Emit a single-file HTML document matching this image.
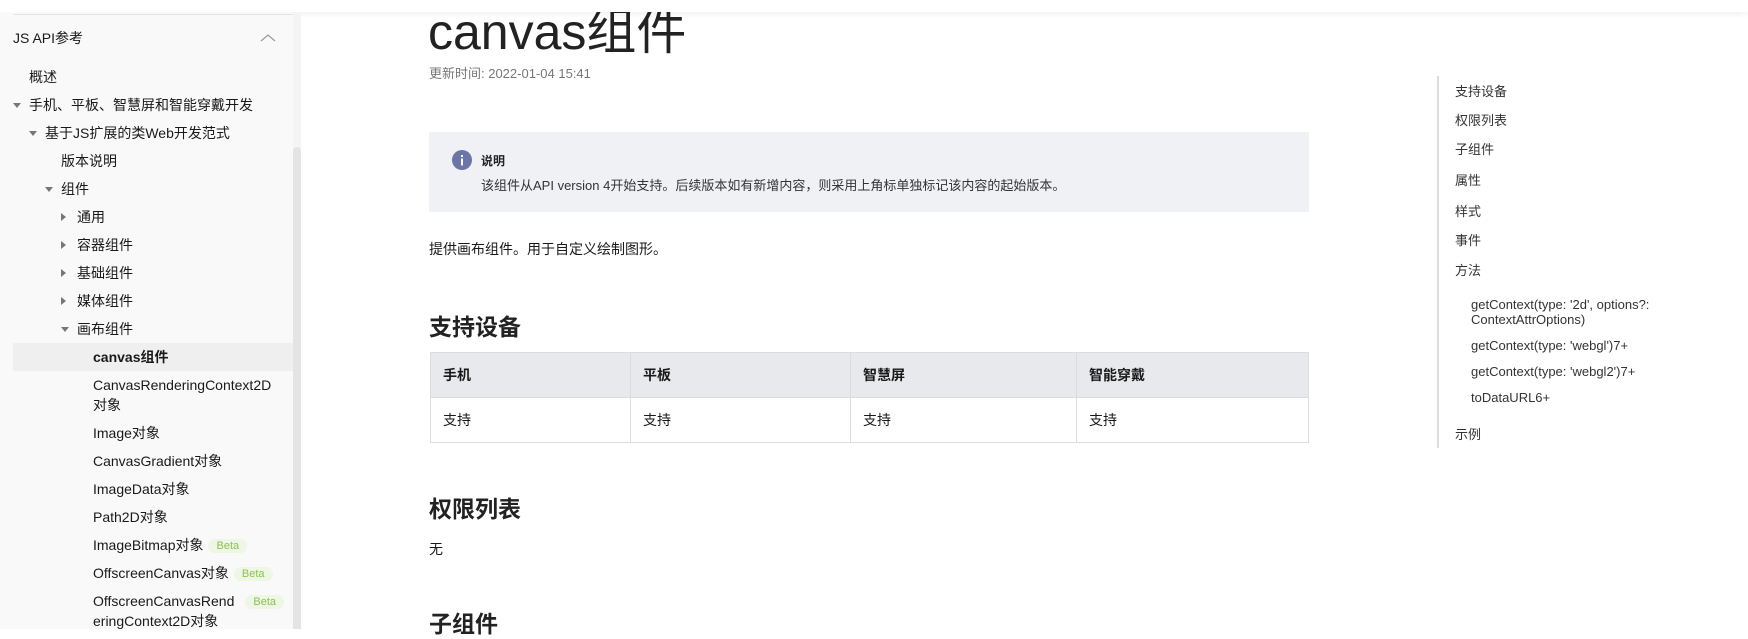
<!DOCTYPE html>
<html><head><meta charset="utf-8"><style>
*{margin:0;padding:0;box-sizing:border-box}
body{width:1748px;height:629px;overflow:hidden;background:#fff;position:relative;font-family:"Liberation Sans","Noto Sans CJK SC",sans-serif;color:#191919}
.a{position:absolute;white-space:nowrap}
#side{position:absolute;left:0;top:12px;width:293px;height:617px;background:#f9f9f9}
#track{position:absolute;left:293px;top:12px;width:8px;height:617px;background:#f4f4f4}
#thumb{position:absolute;left:293px;top:147px;width:8px;height:482px;background:#e4e4e4;border-radius:4px 4px 0 0}
.s{font-size:14px;line-height:20px;color:#191919}
.tri{position:absolute;width:0;height:0;border-left:4px solid transparent;border-right:4px solid transparent;border-top:5px solid #777}
.trr{position:absolute;width:0;height:0;border-top:4px solid transparent;border-bottom:4px solid transparent;border-left:5px solid #777}
.beta{display:inline-block;background:#eef6e5;color:#8cc152;font-size:11px;line-height:14px;padding:0 8px;border-radius:8px;margin-left:5px;vertical-align:1px}
.toc{font-size:13px;color:#333;line-height:16px}
table{border-collapse:collapse;position:absolute;left:430px;top:352px;width:879px;font-size:14px}
td,th{border:1px solid #dcdcdc;text-align:left;padding:0 12px;height:45px;color:#191919}
th{background:#e8e9ec;font-weight:bold}
h2{position:absolute;font-size:23px;font-weight:bold;color:#222;left:429px}
</style></head><body>
<div class="a" style="left:428px;top:2px;font-size:50px;color:#222;line-height:60px">canvas组件</div>
<div style="position:absolute;left:0;top:0;width:1748px;height:12px;background:#fff;box-shadow:0 2px 6px rgba(0,0,0,.06)"></div>
<div class="a" style="left:429px;top:63px;font-size:13px;color:#777">更新时间: 2022-01-04 15:41</div>

<div id="side"></div><div id="track"></div><div id="thumb"></div>
<div style="position:absolute;left:13px;top:14px;width:280px;height:1px;background:#e3e3e3"></div>
<div class="a s" style="left:13px;top:28px">JS API参考</div>
<svg class="a" style="left:260px;top:33px" width="16" height="10"><path d="M1 8 L8 2 L15 8" fill="none" stroke="#999" stroke-width="1.2"/></svg>
<div class="a s" style="left:29px;top:67px">概述</div>
<div class="tri" style="left:13px;top:103px"></div><div class="a s" style="left:29px;top:95px">手机、平板、智慧屏和智能穿戴开发</div>
<div class="tri" style="left:29px;top:131px"></div><div class="a s" style="left:45px;top:123px">基于JS扩展的类Web开发范式</div>
<div class="a s" style="left:61px;top:151px">版本说明</div>
<div class="tri" style="left:45px;top:187px"></div><div class="a s" style="left:61px;top:179px">组件</div>
<div class="trr" style="left:61px;top:213px"></div><div class="a s" style="left:77px;top:207px">通用</div>
<div class="trr" style="left:61px;top:241px"></div><div class="a s" style="left:77px;top:235px">容器组件</div>
<div class="trr" style="left:61px;top:269px"></div><div class="a s" style="left:77px;top:263px">基础组件</div>
<div class="trr" style="left:61px;top:297px"></div><div class="a s" style="left:77px;top:291px">媒体组件</div>
<div class="tri" style="left:61px;top:327px"></div><div class="a s" style="left:77px;top:319px">画布组件</div>
<div style="position:absolute;left:13px;top:343px;width:280px;height:28px;background:#efefef"></div>
<div class="a s" style="left:93px;top:347px;font-weight:bold">canvas组件</div>
<div class="a s" style="left:93px;top:375px">CanvasRenderingContext2D<br>对象</div>
<div class="a s" style="left:93px;top:423px">Image对象</div>
<div class="a s" style="left:93px;top:451px">CanvasGradient对象</div>
<div class="a s" style="left:93px;top:479px">ImageData对象</div>
<div class="a s" style="left:93px;top:507px">Path2D对象</div>
<div class="a s" style="left:93px;top:535px">ImageBitmap对象<span class="beta">Beta</span></div>
<div class="a s" style="left:93px;top:563px">OffscreenCanvas对象<span class="beta">Beta</span></div>
<div class="a s" style="left:93px;top:591px">OffscreenCanvasRend<span class="beta" style="margin-left:11px">Beta</span><br>eringContext2D对象</div>

<div style="position:absolute;left:429px;top:132px;width:880px;height:80px;background:#f0f1f5"></div>
<svg class="a" style="left:452px;top:150px" width="20" height="20"><circle cx="10" cy="10" r="10" fill="#6c74a8"/><rect x="9" y="8.5" width="2" height="7" fill="#fff"/><rect x="9" y="5" width="2" height="2" fill="#fff"/></svg>
<div class="a" style="left:481px;top:152px;font-size:12px;font-weight:bold;color:#222">说明</div>
<div class="a" style="left:481px;top:175px;font-size:13px;color:#333">该组件从API version 4开始支持。后续版本如有新增内容，则采用上角标单独标记该内容的起始版本。</div>
<div class="a" style="left:429px;top:239px;font-size:14px;color:#191919">提供画布组件。用于自定义绘制图形。</div>
<h2 style="top:308px">支持设备</h2>
<table><tr><th style="width:200px">手机</th><th style="width:220px">平板</th><th style="width:226px">智慧屏</th><th>智能穿戴</th></tr>
<tr><td>支持</td><td>支持</td><td>支持</td><td>支持</td></tr></table>
<h2 style="top:490px">权限列表</h2>
<div class="a" style="left:429px;top:539px;font-size:14px">无</div>
<h2 style="top:605px">子组件</h2>

<div style="position:absolute;left:1437px;top:76px;width:2px;height:372px;background:#ddd"></div>
<div class="a toc" style="left:1455px;top:84px">支持设备</div>
<div class="a toc" style="left:1455px;top:113px">权限列表</div>
<div class="a toc" style="left:1455px;top:142px">子组件</div>
<div class="a toc" style="left:1455px;top:173px">属性</div>
<div class="a toc" style="left:1455px;top:204px">样式</div>
<div class="a toc" style="left:1455px;top:233px">事件</div>
<div class="a toc" style="left:1455px;top:263px">方法</div>
<div class="a toc" style="left:1471px;top:297px;line-height:15px">getContext(type: '2d', options?:<br>ContextAttrOptions)</div>
<div class="a toc" style="left:1471px;top:338px">getContext(type: 'webgl')7+</div>
<div class="a toc" style="left:1471px;top:364px">getContext(type: 'webgl2')7+</div>
<div class="a toc" style="left:1471px;top:390px">toDataURL6+</div>
<div class="a toc" style="left:1455px;top:427px">示例</div>
</body></html>
